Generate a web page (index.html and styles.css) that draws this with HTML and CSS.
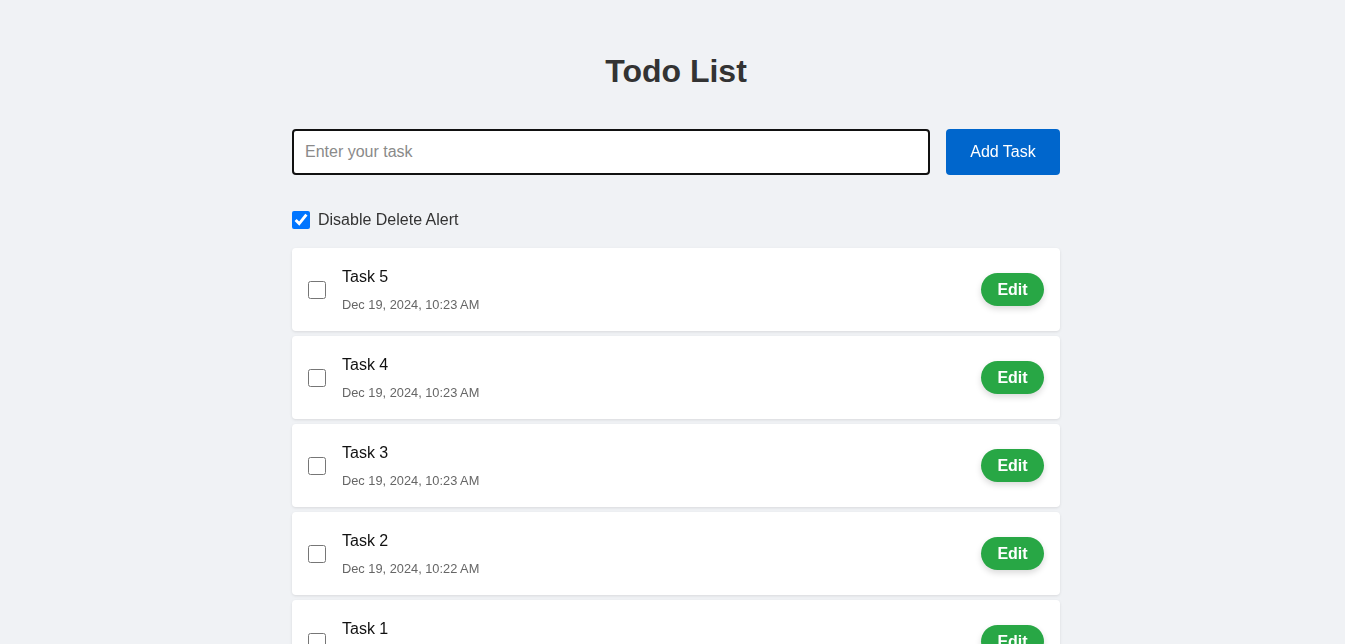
FILE: index.html
```html
<!DOCTYPE html>
<html lang="en">
<head>
<meta charset="utf-8">
<title>Todo List</title>
<link rel="stylesheet" href="styles.css">
</head>
<body>
<main class="app">
  <h1 class="title">Todo List</h1>
  <form class="add-form">
    <input class="task-input" type="text" placeholder="Enter your task" autofocus>
    <button class="add-btn" type="button">Add Task</button>
  </form>
  <label class="alert-toggle">
    <input type="checkbox" class="toggle-box" checked>
    <span>Disable Delete Alert</span>
  </label>
  <ul class="task-list">
    <li class="task">
      <input type="checkbox" class="task-check">
      <div class="task-body">
        <div class="task-name">Task 5</div>
        <div class="task-date">Dec 19, 2024, 10:23 AM</div>
      </div>
      <button class="edit-btn" type="button">Edit</button>
    </li>
    <li class="task">
      <input type="checkbox" class="task-check">
      <div class="task-body">
        <div class="task-name">Task 4</div>
        <div class="task-date">Dec 19, 2024, 10:23 AM</div>
      </div>
      <button class="edit-btn" type="button">Edit</button>
    </li>
    <li class="task">
      <input type="checkbox" class="task-check">
      <div class="task-body">
        <div class="task-name">Task 3</div>
        <div class="task-date">Dec 19, 2024, 10:23 AM</div>
      </div>
      <button class="edit-btn" type="button">Edit</button>
    </li>
    <li class="task">
      <input type="checkbox" class="task-check">
      <div class="task-body">
        <div class="task-name">Task 2</div>
        <div class="task-date">Dec 19, 2024, 10:22 AM</div>
      </div>
      <button class="edit-btn" type="button">Edit</button>
    </li>
    <li class="task">
      <input type="checkbox" class="task-check">
      <div class="task-body">
        <div class="task-name">Task 1</div>
        <div class="task-date">Dec 19, 2024, 10:22 AM</div>
      </div>
      <button class="edit-btn" type="button">Edit</button>
    </li>
  </ul>
</main>
</body>
</html>
```

FILE: styles.css
```css
* { box-sizing: border-box; }
html, body {
  margin: 0;
  padding: 0;
  background: #f0f2f5;
  font-family: "Liberation Sans", Arial, sans-serif;
  color: #333;
}
.app {
  width: 768px;
  margin-left: calc(50% - 380.5px);
  padding-top: 53px;
}
.title {
  margin: 0;
  font-size: 32px;
  line-height: 37px;
  text-align: center;
  font-weight: 700;
  color: #333;
}
.add-form {
  display: flex;
  gap: 16px;
  margin-top: 39px;
}
.task-input {
  flex: 1;
  height: 46px;
  border: 2px solid #111;
  border-radius: 4px;
  padding: 0 11px;
  font-family: inherit;
  font-size: 16px;
  color: #333;
  background: #fff;
  outline: none;
}
.task-input::placeholder { color: #8a8a8a; }
.add-btn {
  width: 114px;
  height: 46px;
  border: none;
  border-radius: 4px;
  background: #0066cc;
  color: #fff;
  font-family: inherit;
  font-size: 16px;
}
.alert-toggle {
  display: flex;
  align-items: center;
  gap: 8px;
  margin-top: 36px;
  font-size: 16px;
  color: #333;
  height: 18px;
}
.toggle-box {
  width: 18px;
  height: 18px;
  margin: 0;
}
.task-list {
  list-style: none;
  margin: 19px 0 0;
  padding: 0;
  display: flex;
  flex-direction: column;
  gap: 5px;
}
.task {
  display: flex;
  align-items: center;
  background: #fff;
  border-radius: 4px;
  box-shadow: 0 1px 3px rgba(0, 0, 0, 0.1);
  padding: 0 16px;
  height: 83px;
}
.task-check {
  width: 18px;
  height: 18px;
  margin: 0 16px 0 0;
}
.task-body {
  flex: 1;
  display: flex;
  flex-direction: column;
}
.task-name {
  font-size: 16px;
  line-height: 18px;
  color: #111;
}
.task-date {
  margin-top: 11px;
  font-size: 12.8px;
  line-height: 15px;
  color: #666;
}
.edit-btn {
  width: 63px;
  height: 33px;
  border: none;
  border-radius: 17px;
  background: #28a745;
  color: #fff;
  font-family: inherit;
  font-size: 16px;
  font-weight: 700;
  box-shadow: 0 3px 6px rgba(0, 0, 0, 0.15);
}
```
